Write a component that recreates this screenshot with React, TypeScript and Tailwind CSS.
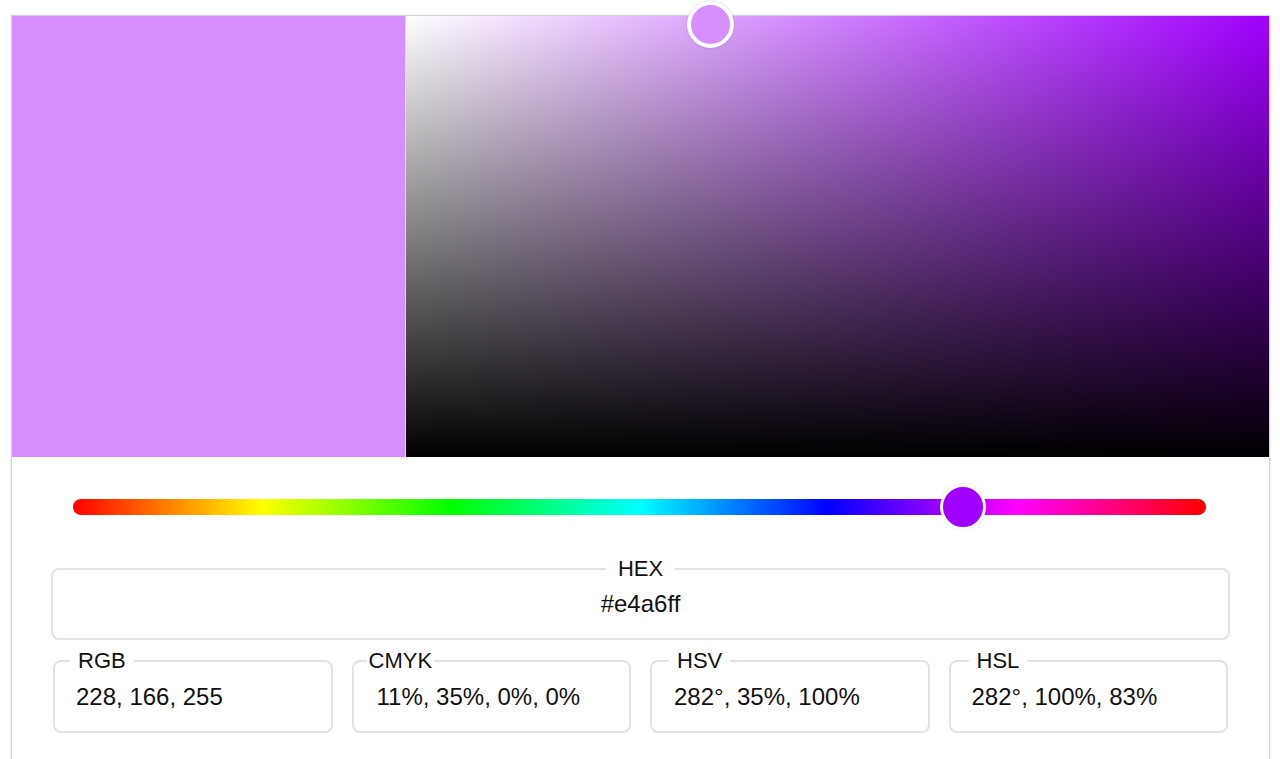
import React from "react";

interface ColorField {
  label: string;
  value: string;
  legendClass: string;
  valueClass: string;
}

const fields: ColorField[] = [
  { label: "RGB", value: "228, 166, 255", legendClass: "ml-[15px] px-2", valueClass: "pl-[21px]" },
  { label: "CMYK", value: "11%, 35%, 0%, 0%", legendClass: "ml-[13px] px-0.5", valueClass: "pl-[23px]" },
  { label: "HSV", value: "282°, 35%, 100%", legendClass: "ml-[17px] px-2", valueClass: "pl-[22px]" },
  { label: "HSL", value: "282°, 100%, 83%", legendClass: "ml-[18px] px-2", valueClass: "pl-[21px]" },
];

export default function App() {
  return (
    <div className="min-h-screen bg-white font-['Liberation_Sans',Arial,sans-serif] text-[#111] overflow-hidden">
      <div className="ml-[11px] mt-[15px] w-[1259px] border border-b-0 border-[#d4d4d8] shadow-[0_0_2px_rgba(0,0,0,0.12)] pb-[40px]">
        {/* colour area */}
        <div className="flex h-[441px]">
          <div className="w-[394px] bg-[#d68efd] border-r border-[#ead2fb]" />
          <div className="relative flex-1 bg-[#a000ff]">
            <div className="absolute inset-0 bg-linear-to-r from-white to-transparent" />
            <div className="absolute inset-0 bg-linear-to-t from-black to-transparent" />
            <div className="absolute left-[281px] top-[-15px] h-[47px] w-[47px] rounded-full border-[4px] border-white bg-[#d68efd] shadow-[0_0_2px_rgba(0,0,0,0.25)]" />
          </div>
        </div>

        {/* hue slider */}
        <div className="pt-[42px] pb-[41px] pl-[61px]">
          <div className="relative h-[16px] w-[1133px] rounded-full bg-[linear-gradient(to_right,#f00,#ff0,#0f0,#0ff,#00f,#f0f,#f00)]">
            <div className="absolute left-[867px] top-[-15px] h-[46px] w-[46px] rounded-full border-[3px] border-white bg-[#a000ff] shadow-[0_0_2px_rgba(0,0,0,0.15)]" />
          </div>
        </div>

        {/* hex */}
        <div className="px-[39px]">
          <fieldset className="rounded-lg border-2 border-[#e2e2e2] text-center">
            <legend className="mx-auto px-3 text-[22px] leading-[26px]">HEX</legend>
            <div className="pt-2 pb-5 text-[24px] leading-[28px]">#e4a6ff</div>
          </fieldset>
        </div>

        {/* other formats */}
        <div className="mt-[8px] grid grid-cols-4 gap-[19px] px-[41px]">
          {fields.map((f) => (
            <fieldset key={f.label} className="rounded-lg border-2 border-[#e2e2e2]">
              <legend className={`${f.legendClass} text-[22px] leading-[26px]`}>{f.label}</legend>
              <div className={`${f.valueClass} pt-[9px] pb-5 text-[24px] leading-[28px]`}>{f.value}</div>
            </fieldset>
          ))}
        </div>
      </div>
    </div>
  );
}
